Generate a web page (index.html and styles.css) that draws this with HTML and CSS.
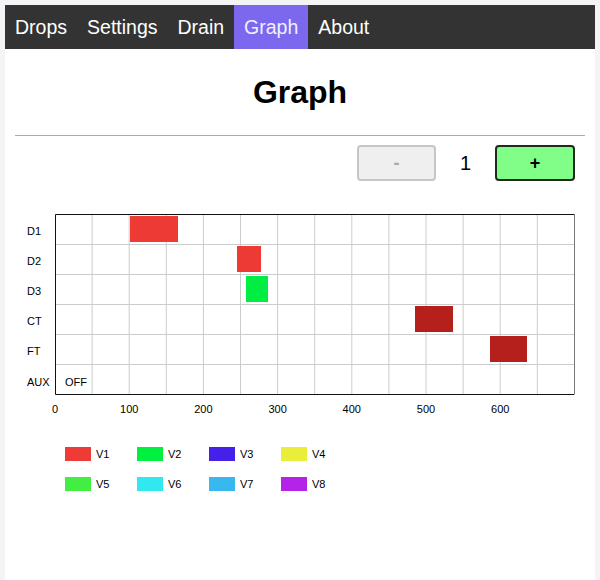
FILE: index.html
```html
<!DOCTYPE html>
<html>
<head>
<meta charset="utf-8">
<link rel="stylesheet" href="styles.css">
</head>
<body>
<div class="page">
  <nav class="nav">
    <a class="nav-item">Drops</a>
    <a class="nav-item">Settings</a>
    <a class="nav-item">Drain</a>
    <a class="nav-item active">Graph</a>
    <a class="nav-item">About</a>
  </nav>
  <h1 class="title">Graph</h1>
  <hr class="rule">
  <div class="controls">
    <button class="btn btn-minus">-</button>
    <span class="count">1</span>
    <button class="btn btn-plus">+</button>
  </div>
  <svg class="chart" width="570" height="220" viewBox="15 200 570 220">
    <g class="grid">
      <line x1="92.1" y1="214" x2="92.1" y2="394"/>
      <line x1="129.2" y1="214" x2="129.2" y2="394"/>
      <line x1="166.3" y1="214" x2="166.3" y2="394"/>
      <line x1="203.4" y1="214" x2="203.4" y2="394"/>
      <line x1="240.5" y1="214" x2="240.5" y2="394"/>
      <line x1="277.6" y1="214" x2="277.6" y2="394"/>
      <line x1="314.7" y1="214" x2="314.7" y2="394"/>
      <line x1="351.8" y1="214" x2="351.8" y2="394"/>
      <line x1="388.9" y1="214" x2="388.9" y2="394"/>
      <line x1="426" y1="214" x2="426" y2="394"/>
      <line x1="463.1" y1="214" x2="463.1" y2="394"/>
      <line x1="500.2" y1="214" x2="500.2" y2="394"/>
      <line x1="537.3" y1="214" x2="537.3" y2="394"/>
      <line x1="55" y1="244.5" x2="574" y2="244.5"/>
      <line x1="55" y1="274.5" x2="574" y2="274.5"/>
      <line x1="55" y1="304.5" x2="574" y2="304.5"/>
      <line x1="55" y1="334.5" x2="574" y2="334.5"/>
      <line x1="55" y1="364.5" x2="574" y2="364.5"/>
    </g>
    <line class="frame-r" x1="574.5" y1="214" x2="574.5" y2="394.5"/>
    <path class="frame" d="M574 214.5 H55.5 V394.5 H574"/>
    <rect class="bar red" x="130" y="216" width="48" height="26"/>
    <rect class="bar red" x="237" y="246" width="24" height="26"/>
    <rect class="bar green" x="246" y="276" width="22" height="26"/>
    <rect class="bar dark" x="415" y="306" width="38" height="26"/>
    <rect class="bar dark" x="490" y="336" width="37" height="26"/>
    <g class="lbl">
      <text x="27" y="235">D1</text>
      <text x="27" y="265">D2</text>
      <text x="27" y="295">D3</text>
      <text x="27" y="325">CT</text>
      <text x="27" y="355">FT</text>
      <text x="27" y="385.5">AUX</text>
      <text x="65" y="385.5">OFF</text>
    </g>
    <g class="lbl axis">
      <text x="55" y="413">0</text>
      <text x="129.2" y="413">100</text>
      <text x="203.4" y="413">200</text>
      <text x="277.6" y="413">300</text>
      <text x="351.8" y="413">400</text>
      <text x="426" y="413">500</text>
      <text x="500.2" y="413">600</text>
    </g>
  </svg>
  <div class="legend">
    <div class="leg"><span class="sw" style="background:#ef3b36"></span>V1</div>
    <div class="leg"><span class="sw" style="background:#00f040"></span>V2</div>
    <div class="leg"><span class="sw" style="background:#4520e8"></span>V3</div>
    <div class="leg"><span class="sw" style="background:#e8ee3a"></span>V4</div>
    <div class="leg"><span class="sw" style="background:#42ee42"></span>V5</div>
    <div class="leg"><span class="sw" style="background:#30e8ee"></span>V6</div>
    <div class="leg"><span class="sw" style="background:#38b8ee"></span>V7</div>
    <div class="leg"><span class="sw" style="background:#b424e8"></span>V8</div>
  </div>
</div>
</body>
</html>
```
FILE: styles.css
```css
html, body {
  margin: 0;
  padding: 0;
}
body {
  background: #f4f4f6;
  padding: 5px 5px 0 5px;
  font-family: "Liberation Sans", Arial, sans-serif;
  color: #000;
}
.page {
  background: #fff;
  min-height: 575px;
}
.nav {
  display: flex;
  background: #333;
  height: 44px;
}
.nav-item {
  display: block;
  padding: 0 10px;
  line-height: 44px;
  font-size: 19.5px;
  color: #fff;
}
.nav-item.active {
  background: #7b68ee;
  color: #f0f0ff;
}
.title {
  margin: 25px 0 0;
  font-size: 32px;
  line-height: 36px;
  text-align: center;
  font-weight: bold;
}
.rule {
  margin: 25px 10px 0;
  border: 0;
  border-top: 1px solid #aaa;
  height: 0;
}
.controls {
  display: flex;
  justify-content: flex-end;
  align-items: center;
  gap: 24px;
  margin-top: 9px;
  padding-right: 20px;
}
.btn {
  width: 80px;
  height: 36px;
  border-radius: 4px;
  font-family: "Liberation Sans", Arial, sans-serif;
  font-weight: bold;
  font-size: 18px;
  padding: 0;
}
.btn-minus {
  background: #efefef;
  border: 2px solid #c6c6c6;
  color: #aaa;
  width: 79px;
}
.btn-plus {
  background: #80fe88;
  border: 2px solid #1e2a1e;
  color: #000;
}
.count {
  font-size: 20px;
}
.chart {
  display: block;
  margin: 19px 0 0 10px;
}
.grid line {
  stroke: #cccccc;
  stroke-width: 1;
}
.frame {
  fill: none;
  stroke: #111;
  stroke-width: 1;
}
.frame-r {
  stroke: #777;
  stroke-width: 1;
}
.bar.red { fill: #ee3a35; }
.bar.green { fill: #00ee44; }
.bar.dark { fill: #b5201c; }
.lbl text {
  font-family: "Liberation Sans", Arial, sans-serif;
  font-size: 11px;
  fill: #000;
}
.axis text {
  text-anchor: middle;
}
.legend {
  display: grid;
  grid-template-columns: repeat(4, 72px);
  grid-auto-rows: 30px;
  margin-top: 19px;
  padding-left: 60px;
}
.leg {
  display: flex;
  align-items: center;
  font-size: 11px;
}
.sw {
  display: block;
  width: 26px;
  height: 14px;
  margin-right: 5px;
}
```
